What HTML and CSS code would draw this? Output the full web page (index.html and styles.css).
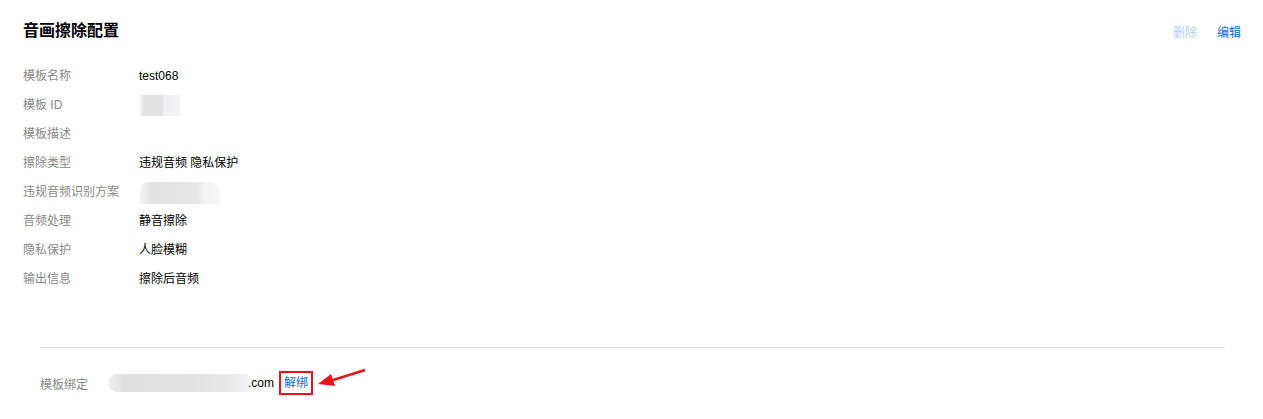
FILE: index.html
```html
<!DOCTYPE html>
<html lang="zh-CN">
<head>
    <meta charset="UTF-8">
    <title>音画擦除配置</title>
    <link rel="stylesheet" href="styles.css">
</head>
<body>
    <div class="panel">
        <div class="panel-head">
            <h2 class="title">音画擦除配置</h2>
            <div class="actions">
                <a class="action disabled">删除</a>
                <a class="action">编辑</a>
            </div>
        </div>

        <ul class="info-list">
            <li><span class="label">模板名称</span><span class="value">test068</span></li>
            <li><span class="label">模板 ID</span><span class="value"><span class="mask mask-id"></span></span></li>
            <li><span class="label">模板描述</span><span class="value"></span></li>
            <li><span class="label">擦除类型</span><span class="value">违规音频 隐私保护</span></li>
            <li><span class="label">违规音频识别方案</span><span class="value"><span class="mask mask-plan"></span></span></li>
            <li><span class="label">音频处理</span><span class="value">静音擦除</span></li>
            <li><span class="label">隐私保护</span><span class="value">人脸模糊</span></li>
            <li><span class="label">输出信息</span><span class="value">擦除后音频</span></li>
        </ul>

        <div class="bind">
            <span class="bind-label">模板绑定</span>
            <span class="bind-value"><span class="mask mask-domain"></span>.com</span>
            <span class="unbind-wrap">
                <a class="unbind">解绑</a>
                <svg class="arrow" width="52" height="22" viewBox="0 0 52 22">
                    <line x1="49" y1="3" x2="14" y2="14" stroke="#e8141c" stroke-width="2.4"/>
                    <polygon points="2,17 15,7 19,19" fill="#e8141c"/>
                </svg>
            </span>
        </div>
    </div>
</body>
</html>
```

FILE: styles.css
```css
body {
    margin: 0;
    background: #fff;
    font-family: "Liberation Sans", "Noto Sans CJK SC", sans-serif;
    font-size: 12px;
    color: #000;
}

.panel {
    padding: 19px 22px 0 23px;
}

.panel-head {
    display: flex;
    justify-content: space-between;
    align-items: center;
    height: 24px;
}

.title {
    margin: 0;
    font-size: 16px;
    font-weight: bold;
    line-height: 24px;
    color: #000;
}

.actions {
    display: flex;
    gap: 20px;
}

.action {
    color: #0a6cf5;
    cursor: pointer;
}

.action.disabled {
    color: #b3ccf7;
}

/* detail rows */
.info-list {
    list-style: none;
    margin: 19px 0 0;
    padding: 0;
}

.info-list li {
    display: flex;
    height: 29px;
    line-height: 29px;
}

.label {
    width: 116px;
    color: #888;
    white-space: nowrap;
}

.value {
    color: #000;
    display: flex;
    align-items: center;
}

.mask {
    display: inline-block;
    background: linear-gradient(90deg, #f6f6f6 0%, #e2e2e2 10%, #e2e2e2 55%, #f0f0f2 60%, #f4f4f6 100%);
}

.mask-id {
    width: 40px;
    height: 21px;
    margin-left: 1px;
}

.mask-plan {
    width: 80px;
    height: 22px;
    margin-left: 1px;
    border-radius: 8px 12px 0 0;
    background: linear-gradient(90deg, #f4f4f4 0%, #e2e2e2 15%, #e6e6e6 70%, #f2f2f2 80%, #f6f6f6 100%);
}

/* binding section */
.bind {
    margin: 53px 16px 0 17px;
    border-top: 1px solid #e5e5e5;
    padding-top: 22px;
    display: flex;
    align-items: center;
    height: 26px;
}

.bind-label {
    width: 68px;
    color: #888;
}

.bind-value {
    display: flex;
    align-items: center;
    color: #000;
}

.mask-domain {
    width: 140px;
    height: 18px;
    border-radius: 9px 0 0 9px;
    background: linear-gradient(90deg, #f1f1f1 0%, #e0e0e0 12%, #e2e2e2 60%, #e8e8e8 85%, #f3f3f5 100%);
}

.unbind-wrap {
    position: relative;
    margin-left: 5px;
}

.unbind {
    display: inline-block;
    border: 2px solid #e8141c;
    padding: 0 3px;
    line-height: 20px;
    color: #0a6cf5;
    cursor: pointer;
}

.arrow {
    position: absolute;
    left: 37px;
    top: -4px;
}
```
